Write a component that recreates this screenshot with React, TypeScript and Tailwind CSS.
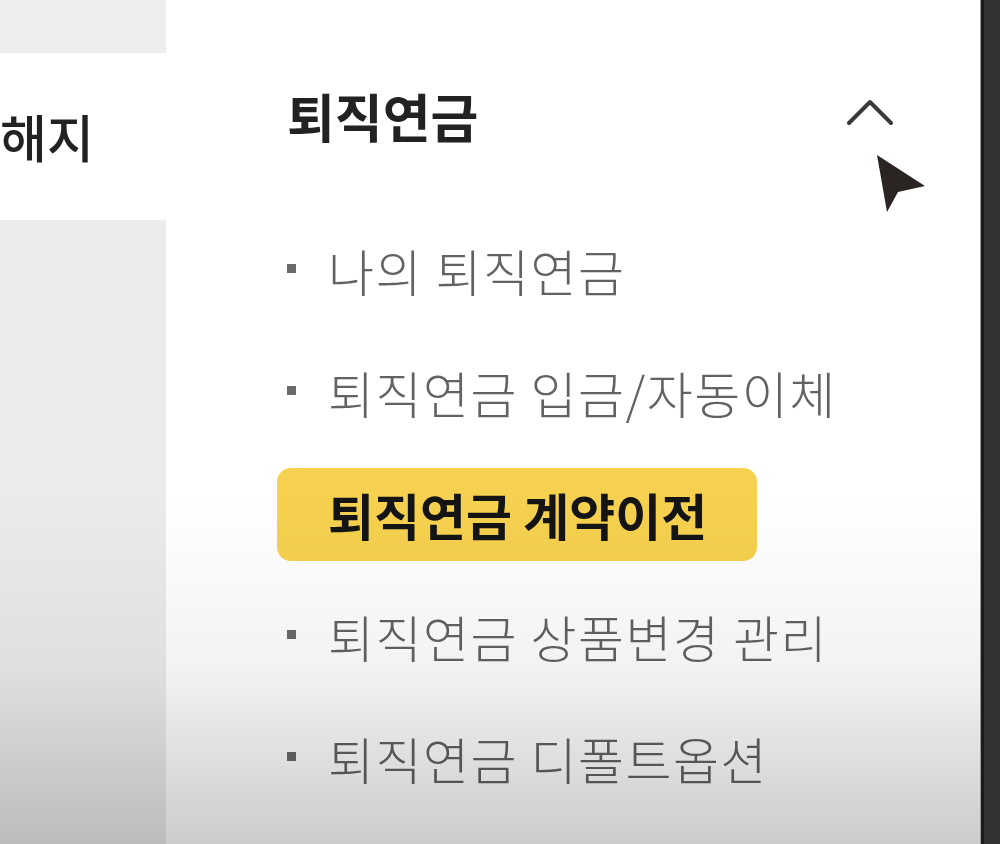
import React from "react";

const items = [
  { label: "나의 퇴직연금" },
  { label: "퇴직연금 입금/자동이체" },
  { label: "퇴직연금 계약이전", active: true },
  { label: "퇴직연금 상품변경 관리" },
  { label: "퇴직연금 디폴트옵션" },
];

const MenuRow: React.FC<{ label: string; active?: boolean }> = ({ label, active }) => {
  if (active) {
    return (
      <div className="flex items-center h-[122px]">
        <div className="flex items-center -ml-[10px] pl-[51px] w-[480px] h-[93px] rounded-[14px] bg-[#f6d14f] text-[50px] font-bold text-[#141414]">
          {label}
        </div>
      </div>
    );
  }
  return (
    <div className="flex items-center h-[122px]">
      {/* square bullet */}
      <span className="w-[41px] flex-shrink-0">
        <span className="block w-[9px] h-[9px] bg-[#6a6a6a] -mt-[4px]"></span>
      </span>
      <span className="text-[50px] font-light text-[#626262] tracking-[1.5px]">{label}</span>
    </div>
  );
};

export default function App() {
  return (
    <div className="relative flex w-[1000px] h-[844px] overflow-hidden bg-white font-['Noto_Sans_CJK_KR',sans-serif]">
      {/* left side menu */}
      <div className="flex flex-col w-[166px] flex-shrink-0">
        <div className="h-[53px] bg-[#eceef0]"></div>
        <div className="flex items-center h-[167px] bg-white text-[51px] font-medium text-[#222]">
          해지
        </div>
        <div className="flex-1 bg-[#e9ebed]"></div>
      </div>

      {/* sub menu panel */}
      <div className="flex-1 flex flex-col pl-[121px] pr-[86px] pt-[78px]">
        <div className="flex items-center justify-between h-[76px]">
          <span className="text-[52px] font-bold text-[#222]">퇴직연금</span>
          <svg width="48" height="30" viewBox="0 0 48 30" fill="none" className="-mt-[6px]">
            <polyline points="3,25 24,4 45,25" stroke="#3a3a3a" strokeWidth="4" strokeLinecap="round" strokeLinejoin="round" />
          </svg>
        </div>
        <div className="flex flex-col mt-[55px]">
          {items.map((it) => (
            <MenuRow key={it.label} label={it.label} active={it.active} />
          ))}
        </div>
      </div>

      {/* dark window edge */}
      <div className="flex w-[20px] flex-shrink-0">
        <div className="w-[1px] bg-[#9a9a9a]"></div>
        <div className="w-[3px] bg-[#1b1b1b]"></div>
        <div className="flex-1 bg-[#333]"></div>
      </div>

      {/* bottom shading overlay */}
      <div className="pointer-events-none absolute left-0 right-[20px] bottom-0 h-[350px] bg-linear-to-b from-transparent via-black/5 to-black/20"></div>

      {/* mouse cursor */}
      <svg className="absolute left-[872px] top-[150px]" width="58" height="66" viewBox="0 0 58 66">
        <polygon points="5,5 53,36 26,42 15,62" fill="#2a2522" />
      </svg>
    </div>
  );
}
